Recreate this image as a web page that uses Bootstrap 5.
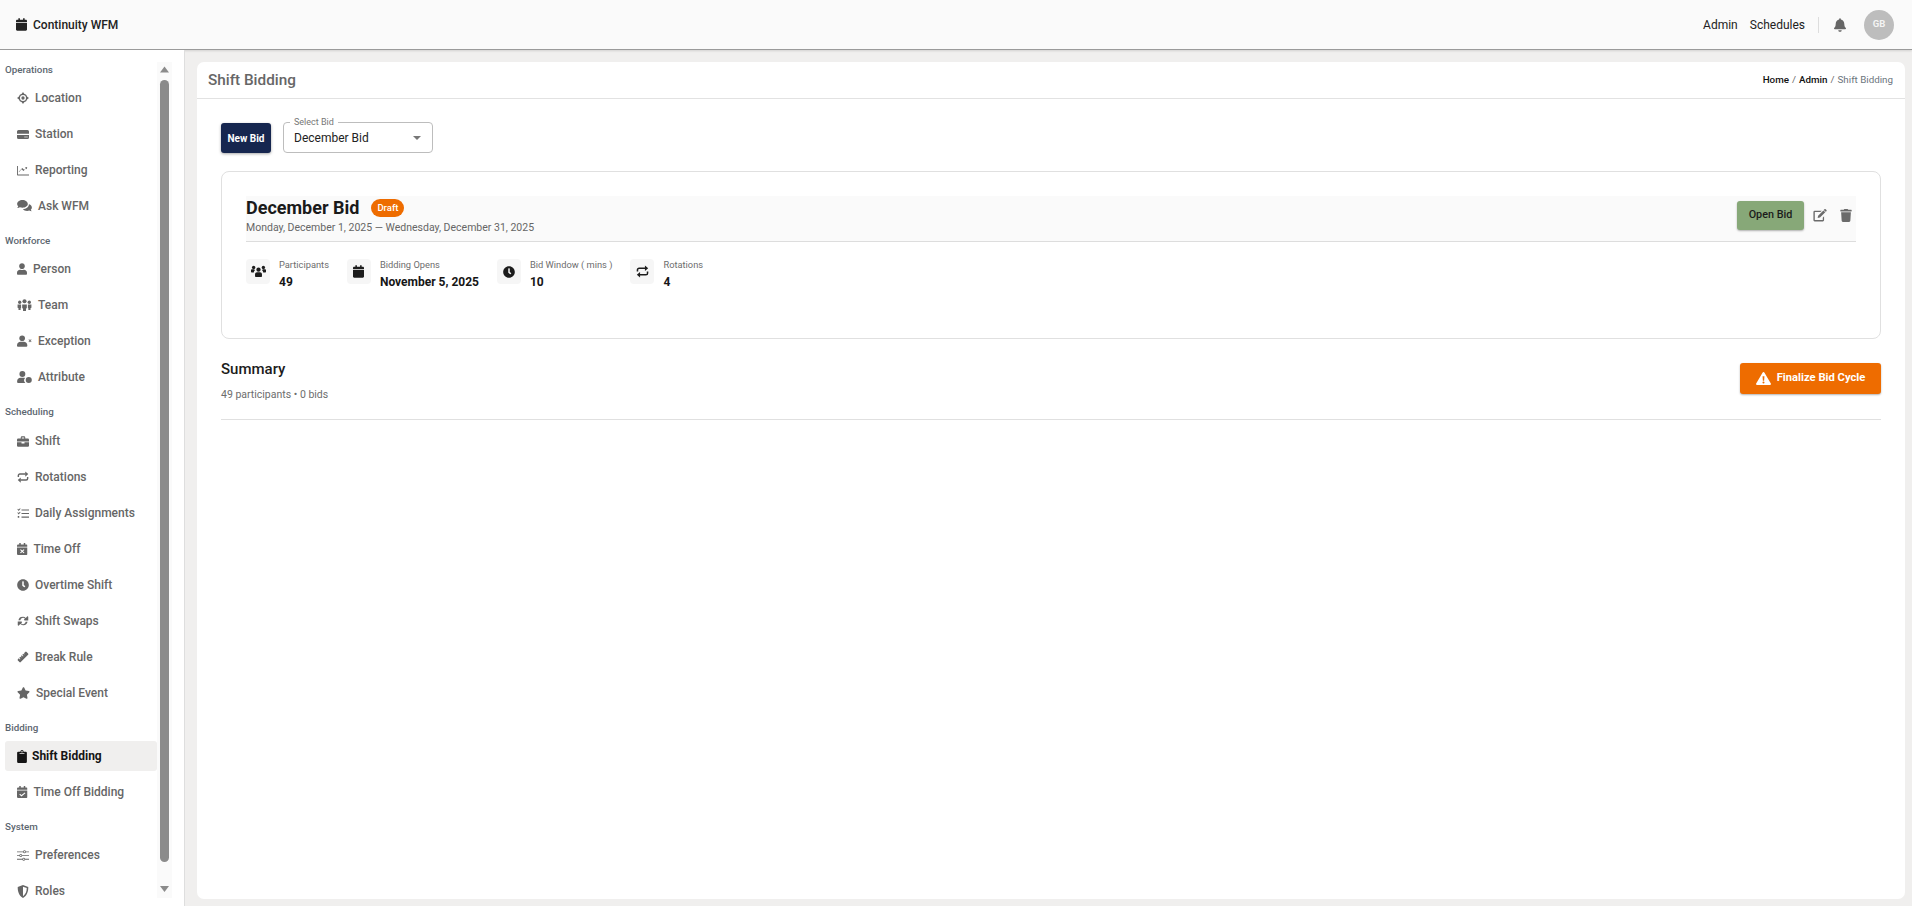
<!doctype html>
<html lang="en">
<head>
<meta charset="utf-8">
<title>Shift Bidding</title>
<link href="https://cdn.jsdelivr.net/npm/bootstrap@5.3.0/dist/css/bootstrap.min.css" rel="stylesheet">
<style>
html,body{height:100%}
body{font-family:Roboto,"Liberation Sans",sans-serif;background:#f0efee;color:#1c1c1c;overflow:hidden}
.top-bar{height:50px;background:#fafafa;border-bottom:1px solid #9a9a9a;box-shadow:0 1px 2px rgba(0,0,0,.12);padding:0 18px 0 16px;flex:none}
.brand-txt{font-size:12px;font-weight:500;color:#222;margin-left:6px}
.top-link{font-size:12px;font-weight:400;color:#222;text-decoration:none}
.top-link-a{margin-right:12px}
.top-sep{width:1px;height:16px;background:#ddd;margin:0 15px 0 13px}
.ava{width:30px;height:30px;border-radius:50%;background:#bdbdbd;color:#f4f4f4;font-size:9.5px;font-weight:700;margin-left:18px}
.shell{height:calc(100% - 50px)}
.side{width:185px;flex:none;background:#fff;border-right:1px solid #dedede;overflow:hidden;padding:10px 12px 0 5px}
.side-col{width:152px;flex:none}
.sec-label{height:20px;line-height:20px;font-size:9.8px;font-weight:500;color:#5c6670;flex:none}
.sec-gap{margin-top:7px}
.sec-tall{height:21px}
.side-item{height:30px;margin:3px 0;padding-left:12px;font-size:12px;font-weight:500;color:#666;text-decoration:none;border-radius:3px;flex:none}
.side-item svg{fill:#666;margin-right:6px;flex:none}
.side-item.is-on{background:#f0efee;color:#151515;font-weight:700}
.side-item.is-on svg{fill:#151515;margin-right:5px}
.scroll-track{width:15px;flex:none;margin-top:2px;height:836px;background:#fafafa}
.scroll-thumb{width:9px;height:782px;background:#8b8b8b;border-radius:5px;flex:none}
.track-end{margin-top:auto;flex:none}
.main-pane{padding:12px 7px 7px 12px;min-width:0}
.page-card{border:0;border-radius:7px;background:#fff}
.page-head{height:37px;border-bottom:1px solid #e2e2e2;padding:0 12px 0 11px}
.page-title{font-size:15.3px;font-weight:500;color:#666;margin:0}
.crumbs{font-size:9.8px;margin:0;--bs-breadcrumb-divider-color:#666;--bs-breadcrumb-item-padding-x:3px}
.crumbs a{color:#111;text-decoration:none;font-weight:500}
.crumbs .active{color:#6c757d}
.page-body{padding:23px 24px 24px}
.new-btn{width:50px;height:30px;padding:0;background:#16264f;border:0;border-radius:3px;color:#fff;font-size:10px;font-weight:700;box-shadow:0 1px 3px rgba(0,0,0,.35);margin-top:1px}
.sel-box{width:150px;height:31px;border:1px solid #bdbdbd;border-radius:4px;margin-left:12px;padding:0 11px 0 10px;position:relative;font-size:12px;color:#222}
.sel-label{position:absolute;left:6px;top:-7px;background:#fff;padding:0 4px;font-size:9px;line-height:12px;color:#777}
.sel-caret{width:0;height:0;border-left:4px solid transparent;border-right:4px solid transparent;border-top:4px solid #777}
.bid-card{height:168px;border:1px solid #e0e0e0;border-radius:8px;margin-top:18px;padding:24px 24px 0 24px;box-shadow:none}
.bid-head{height:46px;background:#fafafa;border-bottom:1px solid #ddd}
.bid-head-l{padding-top:2px}
.bid-title{font-size:18px;font-weight:700;color:#1a1a1a;margin:0;line-height:20px}
.draft-tag{background:#ee6c00;color:#fff;font-size:9.5px;font-weight:500;border-radius:9px;width:33px;height:18px;margin-left:12px}
.bid-dates{font-size:10.5px;color:#666;line-height:14px;margin-top:3px}
.bid-tools{margin-top:5px}
.open-btn{width:67px;height:29px;padding:0;background:#87a878;border:0;border-radius:3px;color:#1b1b1b;font-size:10.8px;font-weight:500;box-shadow:0 1px 2px rgba(0,0,0,.3)}
.tool-ic{fill:#6b6b6b;flex:none}
.tool-edit{margin-left:9px}
.tool-trash{margin-left:13px;margin-right:4px}
.stat-row{margin-top:17px}
.stat-ic{width:24px;height:25px;border-radius:4px;background:#f6f6f6;flex:none}
.stat-ic svg{fill:#1c1c1c}
.stat-txt{margin-left:9px;margin-right:18px}
.stat-lab{font-size:9.3px;line-height:12px;color:#6d6d6d}
.stat-val{font-size:12px;font-weight:700;line-height:16px;margin-top:3px;color:#161616}
.sum-wrap{margin-top:24px;height:57px;border-bottom:1px solid #e0e0e0}
.sum-title{font-size:15px;font-weight:500;color:#1c1c1c;margin:0;line-height:20px;margin-top:-4px}
.sum-sub{font-size:10.5px;color:#6d6d6d;line-height:14px;margin-top:9px}
.final-btn{width:141px;height:31px;padding:0;background:#ee6c00;border:0;border-radius:3px;color:#fff;font-size:11.2px;font-weight:700;box-shadow:0 1px 2px rgba(0,0,0,.3)}
.final-btn svg{fill:#fff;margin-right:6px}
.rt{fill:none;stroke:currentColor;stroke-width:1.9}
.rt-wrap{color:#666}
.stat-ic.rt-wrap{color:#1c1c1c}
</style>
</head>
<body>
<svg width="0" height="0" class="d-none" aria-hidden="true">
<defs>
<symbol id="i-cal" viewBox="0 0 448 512"><path d="M12 192h424c6.6 0 12 5.4 12 12v260c0 26.5-21.5 48-48 48H48c-26.5 0-48-21.5-48-48V204c0-6.6 5.4-12 12-12zm436-44v-36c0-26.5-21.5-48-48-48h-48V12c0-6.6-5.4-12-12-12h-40c-6.6 0-12 5.4-12 12v52H160V12c0-6.6-5.4-12-12-12h-40c-6.6 0-12 5.4-12 12v52H48C21.5 64 0 85.5 0 112v36c0 6.6 5.4 12 12 12h424c6.6 0 12-5.4 12-12z"/></symbol>
<symbol id="i-user" viewBox="0 0 448 512"><path d="M224 256c70.7 0 128-57.3 128-128S294.7 0 224 0 96 57.3 96 128s57.3 128 128 128zm89.6 32h-16.7c-22.2 10.2-46.9 16-72.9 16s-50.6-5.8-72.9-16h-16.7C60.2 288 0 348.2 0 422.4V464c0 26.5 21.5 48 48 48h352c26.5 0 48-21.5 48-48v-41.6c0-74.2-60.2-134.4-134.4-134.4z"/></symbol>
<symbol id="i-clock" viewBox="0 0 512 512"><path d="M256,8C119,8,8,119,8,256S119,504,256,504,504,393,504,256,393,8,256,8Zm92.49,313h0l-20,25a16,16,0,0,1-22.49,2.5h0l-67-49.72a40,40,0,0,1-15-31.23V112a16,16,0,0,1,16-16h32a16,16,0,0,1,16,16V256l58,42.5A16,16,0,0,1,348.49,321Z"/></symbol>
<symbol id="i-star" viewBox="0 0 576 512"><path d="M259.3 17.8L194 150.2 47.9 171.5c-26.2 3.8-36.7 36.1-17.7 54.6l105.7 103-25 145.5c-4.5 26.3 23.2 46 46.4 33.7L288 439.6l130.7 68.7c23.2 12.2 50.9-7.4 46.4-33.7l-25-145.5 105.7-103c19-18.5 8.5-50.8-17.7-54.6L382 150.2 316.7 17.8c-11.7-23.6-45.6-23.9-57.4 0z"/></symbol>
<symbol id="i-trash" viewBox="0 0 448 512"><path d="M432 32H312l-9.4-18.7A24 24 0 0 0 281.1 0H166.8a23.72 23.72 0 0 0-21.4 13.3L136 32H16A16 16 0 0 0 0 48v32a16 16 0 0 0 16 16h416a16 16 0 0 0 16-16V48a16 16 0 0 0-16-16zM53.2 467a48 48 0 0 0 47.9 45h245.8a48 48 0 0 0 47.9-45L416 128H32z"/></symbol>
<symbol id="i-bell" viewBox="0 0 448 512"><path d="M224 512c35.32 0 63.97-28.65 63.97-64H160.03c0 35.35 28.65 64 63.97 64zm215.39-149.71c-19.32-20.76-55.47-51.99-55.47-154.29 0-77.7-54.48-139.9-127.94-155.16V32c0-17.67-14.32-32-31.98-32s-31.98 14.33-31.98 32v20.84C118.56 68.1 64.08 130.3 64.08 208c0 102.3-36.15 133.53-55.47 154.29-6 6.45-8.66 14.16-8.61 21.71.11 16.4 12.98 32 32.1 32h383.8c19.12 0 32-15.6 32.1-32 .05-7.55-2.61-15.27-8.61-21.71z"/></symbol>
<symbol id="i-loc" viewBox="0 0 16 16"><path fill-rule="evenodd" d="M8 0l1.600 2.300A6 6 0 0 1 13.700 6.400L16 8l-2.300 1.600a6 6 0 0 1-4.100 4.100L8 16l-1.600-2.300a6 6 0 0 1-4.100-4.100L0 8l2.300-1.600a6 6 0 0 1 4.100-4.100zM8 4a4 4 0 1 0 0 8 4 4 0 0 0 0-8zm0 1.800a2.200 2.200 0 1 1 0 4.400 2.200 2.200 0 0 1 0-4.400z"/></symbol>
<symbol id="i-server" viewBox="0 0 16 14"><path fill-rule="evenodd" d="M2 1h12a2 2 0 0 1 2 2v3H0V3a2 2 0 0 1 2-2zM0 7.500h16V11a2 2 0 0 1-2 2H2a2 2 0 0 1-2-2zM10 9.500v1.500h1.500V9.500zm2.500 0v1.500H14V9.500z"/></symbol>
<symbol id="i-chart" viewBox="0 0 16 14"><path d="M0 1h1.200v11.300H16v1.200H1a1 1 0 0 1-1-1z"/><path d="M2.600 9.300l3.400-4 2.700 2.400 3-3.500 1.300 1.200.6-3-3 .5 1 1-2 2.200-2.600-2.400-4.600 5.100z"/></symbol>
<symbol id="i-comments" viewBox="0 0 16 13"><path d="M5.800 0C2.600 0 0 1.900 0 4.300c0 1 .4 1.900 1.200 2.600-.2.700-.7 1.300-1.100 1.800 1 0 2.200-.4 2.900-.9.800.3 1.800.5 2.800.5 3.200 0 5.800-1.800 5.800-4S9 0 5.800 0z"/><path d="M12.700 4.800c0 2.900-3.100 5-6.500 4.900.9 1.300 2.700 2.100 4.700 2.100.8 0 1.600-.1 2.300-.4.600.5 1.500.7 2.600.8-.4-.5-.8-1-1-1.700.8-.7 1.200-1.600 1.200-2.500 0-1.500-1.200-2.800-3-3.400z"/></symbol>
<symbol id="i-team" viewBox="0 0 16 13"><circle cx="8" cy="2.500" r="2.200"/><circle cx="2.800" cy="3.500" r="1.800"/><circle cx="13.200" cy="3.500" r="1.800"/><path d="M5.500 6h5v4l-.9.300V13H6.400v-2.700L5.500 10zM.5 6h3.800v3.800l-.5.300V12H1.500V10L.5 9.500zM11.700 6h3.800v3.500l-1 .5v2h-2.300v-1.900l-.5-.3z"/></symbol>
<symbol id="i-userx" viewBox="0 0 16 12"><circle cx="5.500" cy="3" r="3"/><path d="M3.800 6.700h3.400c2.100 0 3.800 1.600 3.800 3.700v.6a1 1 0 0 1-1 1H1a1 1 0 0 1-1-1v-.6c0-2.100 1.700-3.700 3.800-3.700z"/><path d="M12.300 4.700l.6-.6 1 1 1-1 .6.6-1 1 1 1-.6.6-1-1-1 1-.6-.6 1-1z"/></symbol>
<symbol id="i-usercog" viewBox="0 0 16 13"><circle cx="5.700" cy="3.200" r="3.200"/><path d="M3.700 7.300h3.500c.5 0 1 .1 1.400.3a4 4 0 0 0 .3 5.400H1a1 1 0 0 1-1-1v-1c0-2 1.700-3.700 3.700-3.700z"/><circle cx="12.600" cy="9.700" r="3.300"/></symbol>
<symbol id="i-brief" viewBox="0 0 16 14"><path fill-rule="evenodd" d="M5 3V1.500A1.500 1.500 0 0 1 6.500 0h3A1.500 1.500 0 0 1 11 1.500V3h3.500A1.500 1.500 0 0 1 16 4.500V7H0V4.500A1.500 1.500 0 0 1 1.500 3zm1.400 0h3.200V1.500H6.400zM0 8h6v1.500h4V8h6v4.500a1.500 1.500 0 0 1-1.500 1.500h-13A1.500 1.500 0 0 1 0 12.500z"/></symbol>
<symbol id="i-retweet" viewBox="0 0 16 16"><path class="rt" d="M1.800 8V6a2 2 0 0 1 2-2h7.700M14.200 8v2a2 2 0 0 1-2 2H4.500"/><path fill="currentColor" d="M11 .5L15 4l-4 3.500zM5 8.500L1 12l4 3.500z"/></symbol>
<symbol id="i-tasks" viewBox="0 0 16 14"><path d="M6 1.500h10V3H6zM6 6.300h10v1.500H6zM6 11h10v1.500H6z"/><path d="M.5 1.300l.8-.7.9.9L4 0l.8.7-2.600 2.800zM.5 6l.8-.7.9.9L4 4.700l.8.7-2.600 2.800zM1 10.300h2v2.400H1z"/></symbol>
<symbol id="i-calx" viewBox="0 0 14 16"><path fill-rule="evenodd" d="M3 0h2v2h4V0h2v2h1.500A1.500 1.500 0 0 1 14 3.500V5H0V3.500A1.500 1.500 0 0 1 1.500 2H3zM0 6h14v8.500a1.500 1.500 0 0 1-1.500 1.500h-11A1.500 1.500 0 0 1 0 14.500zm5 2.400l-.9.900L6.100 11l-2 1.800.9.900L7 11.900l2 1.800.9-.9-2-1.800 2-1.700-.9-.9-2 1.700z"/></symbol>
<symbol id="i-calc" viewBox="0 0 14 16"><path fill-rule="evenodd" d="M3 0h2v2h4V0h2v2h1.500A1.500 1.500 0 0 1 14 3.500V5H0V3.500A1.500 1.500 0 0 1 1.500 2H3zM0 6h14v8.500a1.500 1.500 0 0 1-1.500 1.500h-11A1.500 1.500 0 0 1 0 14.500zm10.300 2.500L6 12.100 4 10.300l-.9 1L6 14l5.200-4.500z"/></symbol>
<symbol id="i-sync" viewBox="0 0 16 16"><path d="M8 2.500a5.500 5.500 0 0 1 3.700 1.400L13.500 2c.4-.4 1.500-.2 1.500.7V7.300H10.300c-.8 0-1.200-1-.7-1.500l1-1A3.600 3.600 0 0 0 4.500 7H1.900A5.900 5.900 0 0 1 8 2.500zM8 13.500a5.500 5.500 0 0 1-3.700-1.400L2.500 14c-.4.400-1.500.2-1.500-.7V8.700h4.700c.8 0 1.200 1 .7 1.500l-1 1a3.600 3.600 0 0 0 6.100-2.200h2.600A5.900 5.900 0 0 1 8 13.500z"/></symbol>
<symbol id="i-ruler" viewBox="0 0 16 16"><path d="M11 1.200a1.300 1.300 0 0 1 1.800 0l2 2a1.300 1.300 0 0 1 0 1.800L5 14.800a1.300 1.300 0 0 1-1.800 0l-2-2a1.300 1.300 0 0 1 0-1.800l1.200-1.200 1.500 1.500.7-.7-1.500-1.500 1.300-1.300 1 1 .7-.7-1-1 1.300-1.300 1.500 1.500.7-.7-1.500-1.500 1.300-1.300 1 1 .7-.7-1-1z"/></symbol>
<symbol id="i-clip" viewBox="0 0 12 16"><path fill-rule="evenodd" d="M4 2a2 2 0 0 1 4 0h2.500A1.500 1.500 0 0 1 12 3.500v11a1.500 1.500 0 0 1-1.500 1.500h-9A1.500 1.500 0 0 1 0 14.500v-11A1.500 1.500 0 0 1 1.500 2zM6 1.200a.9.900 0 1 0 0 1.800.9.900 0 0 0 0-1.800zM3 4v1h6V4z"/></symbol>
<symbol id="i-sliders" viewBox="0 0 16 14"><path fill-rule="evenodd" d="M0 1.500h8.100a2 2 0 0 1 3.800 0H16v1.100h-4.100a2 2 0 0 1-3.800 0H0zm10-.4a.9.900 0 1 0 0 1.900.9.900 0 0 0 0-1.900zM0 6.500h3.100a2 2 0 0 1 3.800 0H16v1.100H6.900a2 2 0 0 1-3.800 0H0zm5-.4a.9.900 0 1 0 0 1.900.9.900 0 0 0 0-1.900zM0 11.400h7.100a2 2 0 0 1 3.800 0H16v1.100h-5.100a2 2 0 0 1-3.800 0H0zm9-.4a.9.900 0 1 0 0 1.900.9.900 0 0 0 0-1.900z"/></symbol>
<symbol id="i-shield" viewBox="0 0 14 16"><path fill-rule="evenodd" d="M7 0l6.500 2.500c.2 5.500-1.600 10.800-6.500 13.500C2.100 13.300.3 8 .5 2.500zM7 2v11.700c3.200-2.100 4.600-5.700 4.600-9.900z"/></symbol>
<symbol id="i-edit" viewBox="0 0 16 15"><path d="M11.200 10V12.800H2V3.600h6.500l1.600-1.500H1.800A1.500 1.500 0 0 0 .4 3.500v9.500a1.500 1.500 0 0 0 1.400 1.400h9.500a1.500 1.500 0 0 0 1.400-1.400V8.400zM5.800 7.700l-.5 2.700 2.700-.5 6.100-6.100-2.200-2.200zM15.500 1.200L14.500.3a1 1 0 0 0-1.400 0l-.8.800 2.200 2.200.9-.8a1 1 0 0 0 0-1.400z"/></symbol>
<symbol id="i-users" viewBox="0 0 16 13"><circle cx="8" cy="4.500" r="2.300"/><circle cx="2.800" cy="2.200" r="1.800"/><circle cx="13.200" cy="2.200" r="1.800"/><path d="M4.300 9.300c0-1.300 1-2.100 2.100-2.100h3.200c1.100 0 2.100.8 2.100 2.100v2.200a.8.800 0 0 1-.8.800H5.100a.8.800 0 0 1-.8-.800zM0 5c0-.7.600-.9 1.200-.9h2.200c.4.300.5.900.7 1.400C3.500 6 3 6.700 3 7.500H.8A.8.800 0 0 1 0 6.700zM16 5c0-.7-.6-.9-1.200-.9h-2.200c-.4.300-.5.900-.7 1.400.6.500 1.100 1.200 1.100 2h2.200a.8.800 0 0 0 .8-.8z"/></symbol>
<symbol id="i-warn" viewBox="0 0 16 14"><path fill-rule="evenodd" d="M8 0a1 1 0 0 1 .9.500l7 12A1 1 0 0 1 15 14H1a1 1 0 0 1-.9-1.500l7-12A1 1 0 0 1 8 0zM7 4.500l.3 5h1.400l.3-5zM8 10.300a1.100 1.100 0 1 0 0 2.200 1.100 1.100 0 0 0 0-2.200z"/></symbol>
</defs>
</svg>

<header class="top-bar d-flex align-items-center justify-content-between">
  <div class="d-flex align-items-center">
    <svg width="11" height="13" fill="#222"><use href="#i-cal"/></svg>
    <span class="brand-txt">Continuity WFM</span>
  </div>
  <div class="d-flex align-items-center">
    <a class="top-link top-link-a" href="#">Admin</a>
    <a class="top-link" href="#">Schedules</a>
    <span class="top-sep"></span>
    <svg width="12" height="14" fill="#666"><use href="#i-bell"/></svg>
    <span class="ava d-flex align-items-center justify-content-center">GB</span>
  </div>
</header>

<div class="shell d-flex">
  <aside class="side d-flex">
    <div class="side-col d-flex flex-column">
      <div class="sec-label">Operations</div>
      <a class="side-item d-flex align-items-center" href="#"><svg width="12" height="12"><use href="#i-loc"/></svg>Location</a>
      <a class="side-item d-flex align-items-center" href="#"><svg width="12" height="11"><use href="#i-server"/></svg>Station</a>
      <a class="side-item d-flex align-items-center" href="#"><svg width="12" height="11"><use href="#i-chart"/></svg>Reporting</a>
      <a class="side-item d-flex align-items-center" href="#"><svg width="15" height="12"><use href="#i-comments"/></svg>Ask WFM</a>
      <div class="sec-label sec-gap">Workforce</div>
      <a class="side-item d-flex align-items-center" href="#"><svg width="10" height="12"><use href="#i-user"/></svg>Person</a>
      <a class="side-item d-flex align-items-center" href="#"><svg width="15" height="12"><use href="#i-team"/></svg>Team</a>
      <a class="side-item d-flex align-items-center" href="#"><svg width="15" height="12"><use href="#i-userx"/></svg>Exception</a>
      <a class="side-item d-flex align-items-center" href="#"><svg width="15" height="12"><use href="#i-usercog"/></svg>Attribute</a>
      <div class="sec-label sec-gap sec-tall">Scheduling</div>
      <a class="side-item d-flex align-items-center" href="#"><svg width="12" height="11"><use href="#i-brief"/></svg>Shift</a>
      <a class="side-item d-flex align-items-center rt-wrap" href="#"><svg width="12" height="12"><use href="#i-retweet"/></svg>Rotations</a>
      <a class="side-item d-flex align-items-center" href="#"><svg width="12" height="11"><use href="#i-tasks"/></svg>Daily Assignments</a>
      <a class="side-item d-flex align-items-center" href="#"><svg width="10.5" height="12"><use href="#i-calx"/></svg>Time Off</a>
      <a class="side-item d-flex align-items-center" href="#"><svg width="12" height="12"><use href="#i-clock"/></svg>Overtime Shift</a>
      <a class="side-item d-flex align-items-center" href="#"><svg width="12" height="12"><use href="#i-sync"/></svg>Shift Swaps</a>
      <a class="side-item d-flex align-items-center" href="#"><svg width="12" height="12"><use href="#i-ruler"/></svg>Break Rule</a>
      <a class="side-item d-flex align-items-center" href="#"><svg width="13" height="12"><use href="#i-star"/></svg>Special Event</a>
      <div class="sec-label sec-gap">Bidding</div>
      <a class="side-item is-on d-flex align-items-center" href="#"><svg width="10" height="13"><use href="#i-clip"/></svg>Shift Bidding</a>
      <a class="side-item d-flex align-items-center" href="#"><svg width="10.5" height="12"><use href="#i-calc"/></svg>Time Off Bidding</a>
      <div class="sec-label sec-gap">System</div>
      <a class="side-item d-flex align-items-center" href="#"><svg width="12" height="11"><use href="#i-sliders"/></svg>Preferences</a>
      <a class="side-item d-flex align-items-center" href="#"><svg width="12" height="13"><use href="#i-shield"/></svg>Roles</a>
    </div>
    <div class="scroll-track d-flex flex-column align-items-center">
      <svg width="9" height="18" fill="#8b8b8b" class="flex-shrink-0"><path d="M4.500 4.500L9 10.500H0z"/></svg>
      <div class="scroll-thumb"></div>
      <svg width="9" height="18" fill="#8b8b8b" class="track-end"><path d="M0 6h9L4.500 12z"/></svg>
    </div>
  </aside>

  <main class="main-pane flex-grow-1 d-flex">
    <section class="page-card card flex-grow-1">
      <div class="page-head d-flex align-items-center justify-content-between">
        <h1 class="page-title">Shift Bidding</h1>
        <ol class="breadcrumb crumbs">
          <li class="breadcrumb-item"><a href="#">Home</a></li>
          <li class="breadcrumb-item"><a href="#">Admin</a></li>
          <li class="breadcrumb-item active">Shift Bidding</li>
        </ol>
      </div>
      <div class="page-body">
        <div class="d-flex align-items-start">
          <button class="new-btn btn" type="button">New Bid</button>
          <div class="sel-box d-flex align-items-center justify-content-between">
            <span class="sel-label">Select Bid</span>
            <span>December Bid</span>
            <span class="sel-caret"></span>
          </div>
        </div>

        <div class="bid-card card">
          <div class="bid-head d-flex justify-content-between align-items-start">
            <div class="bid-head-l">
              <div class="d-flex align-items-center">
                <h2 class="bid-title">December Bid</h2>
                <span class="draft-tag d-flex align-items-center justify-content-center">Draft</span>
              </div>
              <div class="bid-dates">Monday, December 1, 2025 — Wednesday, December 31, 2025</div>
            </div>
            <div class="bid-tools d-flex align-items-center">
              <button class="open-btn btn" type="button">Open Bid</button>
              <svg class="tool-ic tool-edit" width="14" height="13"><use href="#i-edit"/></svg>
              <svg class="tool-ic tool-trash" width="12" height="13"><use href="#i-trash"/></svg>
            </div>
          </div>
          <div class="stat-row d-flex">
            <div class="stat-ic d-flex align-items-center justify-content-center"><svg width="15" height="13"><use href="#i-users"/></svg></div>
            <div class="stat-txt"><div class="stat-lab">Participants</div><div class="stat-val">49</div></div>
            <div class="stat-ic d-flex align-items-center justify-content-center"><svg width="11" height="13"><use href="#i-cal"/></svg></div>
            <div class="stat-txt"><div class="stat-lab">Bidding Opens</div><div class="stat-val">November 5, 2025</div></div>
            <div class="stat-ic d-flex align-items-center justify-content-center"><svg width="12" height="12"><use href="#i-clock"/></svg></div>
            <div class="stat-txt"><div class="stat-lab">Bid Window ( mins )</div><div class="stat-val">10</div></div>
            <div class="stat-ic d-flex align-items-center justify-content-center rt-wrap"><svg width="13" height="13"><use href="#i-retweet"/></svg></div>
            <div class="stat-txt"><div class="stat-lab">Rotations</div><div class="stat-val">4</div></div>
          </div>
        </div>

        <div class="sum-wrap d-flex justify-content-between align-items-start">
          <div>
            <h3 class="sum-title">Summary</h3>
            <div class="sum-sub">49 participants • 0 bids</div>
          </div>
          <button class="final-btn btn d-flex align-items-center justify-content-center" type="button"><svg width="15" height="13"><use href="#i-warn"/></svg>Finalize Bid Cycle</button>
        </div>
      </div>
    </section>
  </main>
</div>
<script src="https://cdn.jsdelivr.net/npm/bootstrap@5.3.0/dist/js/bootstrap.bundle.min.js"></script>
</body>
</html>
